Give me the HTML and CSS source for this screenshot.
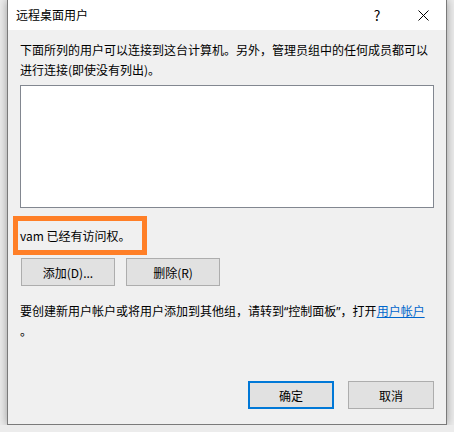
FILE: index.html
```html
<!DOCTYPE html>
<html lang="zh-CN">
<head>
    <meta charset="UTF-8">
    <title>远程桌面用户</title>
    <link rel="stylesheet" href="styles.css">
</head>
<body>

    <div class="window">
        <div class="titlebar">
            <span class="title">远程桌面用户</span>
            <button class="caption-btn help">?</button>
            <button class="caption-btn close">
                <svg width="11" height="11" viewBox="0 0 11 11"><path d="M0.5 0.5 L10.5 10.5 M10.5 0.5 L0.5 10.5" stroke="#000" stroke-width="1" fill="none"/></svg>
            </button>
        </div>

        <div class="content">
            <p class="intro">下面所列的用户可以连接到这台计算机。另外，管理员组中的任何成员都可以进行连接(即使没有列出)。</p>

            <div class="userlist"></div>

            <div class="status">vam 已经有访问权。</div>

            <div class="row">
                <button class="btn">添加(D)...</button>
                <button class="btn">删除(R)</button>
            </div>

            <p class="hint">要创建新用户帐户或将用户添加到其他组，请转到“控制面板”，打开<a href="#">用户帐户</a>。</p>

            <div class="footer">
                <button class="btn default">确定</button>
                <button class="btn">取消</button>
            </div>
        </div>
    </div>

</body>
</html>
```

FILE: styles.css
```css
:root {
    --face: #f0f0f0;
    --btn: #e1e1e1;
    --btn-border: #adadad;
    --accent: #0078d7;
    --mark: #ff7f27;
    --font: "Noto Sans CJK SC", "Noto Sans", sans-serif;
}

* { margin: 0; padding: 0; box-sizing: border-box; }

body {
    background: #ececec;
    font-family: var(--font);
    font-size: 12px;
    color: #000;
    overflow: hidden;
}

.window {
    margin-left: 7px;
    width: 440px;
    height: 425px;
    border: 1px solid #7a7a7a;
    border-top: none;
    background: var(--face);
    box-shadow: 0 0 9px rgba(0,0,0,0.35);
    display: flex;
    flex-direction: column;
}

.titlebar {
    height: 30px;
    background: #fff;
    display: flex;
    align-items: center;
    padding-left: 8px;
}

.title {
    flex: 1;
    line-height: 30px;
}

.caption-btn {
    width: 46px;
    height: 30px;
    border: none;
    background: transparent;
    font-family: var(--font);
    font-size: 14px;
    display: flex;
    align-items: center;
    justify-content: center;
}

.content {
    flex: 1;
    padding: 10px 12px 15px;
    display: flex;
    flex-direction: column;
}

.intro {
    line-height: 20px;
}

.userlist {
    margin-top: 5px;
    height: 123px;
    background: #fff;
    border: 1px solid #828790;
}

.status {
    align-self: flex-start;
    margin: 8px 0 0 -7px;
    width: 134px;
    height: 39px;
    padding: 1px 0 0 2px;
    border: 5px solid var(--mark);
    line-height: 28px;
    white-space: nowrap;
}

.row {
    display: flex;
    gap: 11px;
    margin-top: 3px;
    padding-left: 1px;
}

.btn {
    width: 94px;
    height: 28px;
    background: var(--btn);
    border: 1px solid var(--btn-border);
    font-family: var(--font);
    font-size: 12px;
    color: #000;
}

.hint {
    margin-top: 16px;
    line-height: 20px;
    font-family: "Noto Sans", "Noto Sans CJK SC", sans-serif;
    line-break: anywhere;
}

.hint a {
    color: #0066cc;
}

.footer {
    margin-top: auto;
    display: flex;
    justify-content: flex-end;
    gap: 14px;
}

.footer .btn {
    width: 86px;
}

.btn.default {
    border: 2px solid var(--accent);
}
```
